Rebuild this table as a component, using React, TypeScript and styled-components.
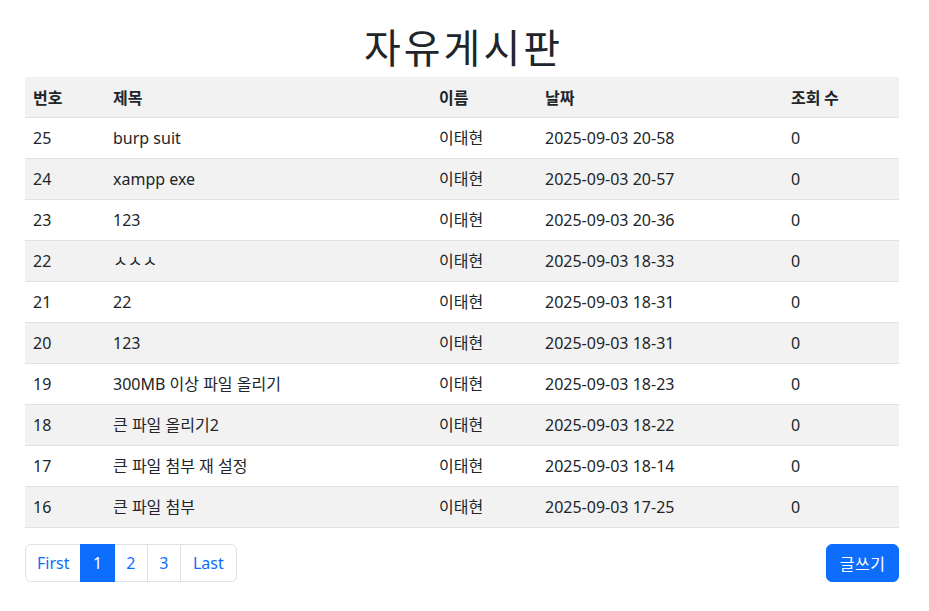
import React from "react";
import styled, { createGlobalStyle } from "styled-components";

const Global = createGlobalStyle`
  html, body { margin: 0; padding: 0; background: #fff; }
  body {
    font-family: "Noto Sans", "Noto Sans CJK KR", sans-serif;
    font-size: 16px;
    line-height: 1.5;
    color: #212529;
  }
  * { box-sizing: border-box; }
`;

const Page = styled.div`
  padding: 22px 30px 0 25px;
`;

const Title = styled.h1`
  margin: 0 0 7px;
  text-align: center;
  font-size: 40px;
  font-weight: 400;
  line-height: 1.2;
  letter-spacing: 3px;
  text-indent: 3px;
  font-family: "Noto Sans CJK KR", sans-serif;
`;

const Table = styled.table`
  width: 874px;
  border-collapse: collapse;
  table-layout: fixed;
  margin-bottom: 16px;
`;

const Row = styled.tr<{ $striped: boolean }>`
  background: ${(p) => (p.$striped ? "#f2f2f2" : "#fff")};
  border-bottom: 1px solid #dee2e6;
`;

const Th = styled.th<{ $w: number }>`
  width: ${(p) => p.$w}px;
  text-align: left;
  font-weight: 700;
  padding: 8px;
  height: 40px;
  font-family: "Noto Sans CJK KR", sans-serif;
`;

const Td = styled.td`
  padding: 8px;
  height: 41px;
  font-family: "Noto Sans", "Noto Sans CJK KR", sans-serif;
`;

const Footer = styled.div`
  display: flex;
  justify-content: space-between;
  align-items: flex-start;
  width: 874px;
`;

const Pager = styled.ul`
  display: flex;
  list-style: none;
  margin: 0;
  padding: 0;
`;

const PageLink = styled.a<{ $active?: boolean; $first?: boolean; $last?: boolean }>`
  display: block;
  height: 38px;
  padding: 6px ${(p) => (p.$first ? "11px" : p.$last ? "12px" : "11.5px")};
  border: 1px solid ${(p) => (p.$active ? "#0d6efd" : "#dee2e6")};
  margin-left: ${(p) => (p.$first ? "0" : "-1px")};
  background: ${(p) => (p.$active ? "#0d6efd" : "#fff")};
  color: ${(p) => (p.$active ? "#fff" : "#0d6efd")};
  text-decoration: none;
  border-radius: ${(p) => (p.$first ? "6px 0 0 6px" : p.$last ? "0 6px 6px 0" : "0")};
  position: relative;
  z-index: ${(p) => (p.$active ? 1 : 0)};
`;

const WriteButton = styled.button`
  height: 38px;
  padding: 6px 12.5px;
  border: 1px solid #0d6efd;
  border-radius: 6px;
  background: #0d6efd;
  color: #fff;
  font-size: 16px;
  line-height: 1.5;
  letter-spacing: 0.5px;
  font-family: "Noto Sans CJK KR", sans-serif;
`;

const cols: [string, number][] = [
  ["번호", 80],
  ["제목", 326],
  ["이름", 106],
  ["날짜", 246],
  ["조회 수", 116],
];

const rows = [
  [25, "burp suit", "2025-09-03 20-58"],
  [24, "xampp exe", "2025-09-03 20-57"],
  [23, "123", "2025-09-03 20-36"],
  [22, "ㅅㅅㅅ", "2025-09-03 18-33"],
  [21, "22", "2025-09-03 18-31"],
  [20, "123", "2025-09-03 18-31"],
  [19, "300MB 이상 파일 올리기", "2025-09-03 18-23"],
  [18, "큰 파일 올리기2", "2025-09-03 18-22"],
  [17, "큰 파일 첨부 재 설정", "2025-09-03 18-14"],
  [16, "큰 파일 첨부", "2025-09-03 17-25"],
];

export default function App() {
  return (
    <Page>
      <Global />
      <Title>자유게시판</Title>
      <Table>
        <thead>
          <Row $striped>
            {cols.map(([c, w]) => (
              <Th key={c} $w={w}>{c}</Th>
            ))}
          </Row>
        </thead>
        <tbody>
          {rows.map(([n, t, d], i) => (
            <Row key={n} $striped={i % 2 === 1}>
              <Td>{n}</Td>
              <Td>{t}</Td>
              <Td>이태현</Td>
              <Td>{d}</Td>
              <Td>0</Td>
            </Row>
          ))}
        </tbody>
      </Table>
      <Footer>
        <Pager>
          <li><PageLink $first href="#">First</PageLink></li>
          <li><PageLink $active href="#">1</PageLink></li>
          <li><PageLink href="#">2</PageLink></li>
          <li><PageLink href="#">3</PageLink></li>
          <li><PageLink $last href="#">Last</PageLink></li>
        </Pager>
        <WriteButton>글쓰기</WriteButton>
      </Footer>
    </Page>
  );
}
